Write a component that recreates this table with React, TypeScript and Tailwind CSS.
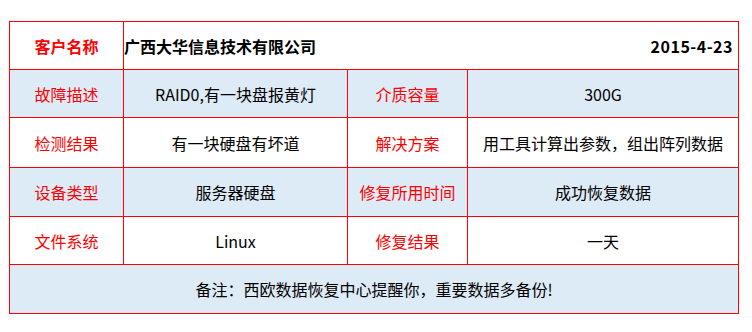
const rows = [
  { label: '故障描述', value: 'RAID0,有一块盘报黄灯', label2: '介质容量', value2: '300G', blue: true },
  { label: '检测结果', value: '有一块硬盘有坏道', label2: '解决方案', value2: '用工具计算出参数，组出阵列数据', blue: false },
  { label: '设备类型', value: '服务器硬盘', label2: '修复所用时间', value2: '成功恢复数据', blue: true },
  { label: '文件系统', value: 'Linux', label2: '修复结果', value2: '一天', blue: false },
];

export default function App() {
  return (
    <div
      className="w-[752px] h-[332px] bg-white pt-[21px] pl-[9px]"
      style={{ fontFamily: '"Microsoft YaHei", "Noto Sans CJK SC", sans-serif' }}
    >
      <div className="grid w-[730px] grid-cols-[114px_224px_120px_271px] grid-rows-[48px_48px_50px_49px_48px_49px] border-l border-t border-[#ff0000] text-[16px] leading-none text-black">
        <div className="flex items-center justify-center border-r border-b border-[#ff0000] font-bold text-[#ff0000]">
          客户名称
        </div>
        <div className="col-span-3 flex items-center justify-between border-r border-b border-[#ff0000] pl-0 pr-[5px] font-bold">
          <span>广西大华信息技术有限公司</span>
          <span className="tracking-[0.5px]">2015-4-23</span>
        </div>
        {rows.map((r) => {
          const bg = r.blue ? 'bg-[#ddebf7]' : 'bg-white';
          return (
            <div key={r.label} className="contents">
              <div className={`flex items-center justify-center border-r border-b border-[#ff0000] text-[#ff0000] ${bg}`}>
                {r.label}
              </div>
              <div className={`flex items-center justify-center border-r border-b border-[#ff0000] ${bg}`}>
                {r.value}
              </div>
              <div className={`flex items-center justify-center border-r border-b border-[#ff0000] text-[#ff0000] ${bg}`}>
                {r.label2}
              </div>
              <div className={`flex items-center justify-center border-r border-b border-[#ff0000] ${bg}`}>
                {r.value2}
              </div>
            </div>
          );
        })}
        <div className="col-span-4 flex items-center justify-center border-r border-b border-[#ff0000] bg-[#ddebf7]">
          备注：西欧数据恢复中心提醒你，重要数据多备份!
        </div>
      </div>
    </div>
  );
}
